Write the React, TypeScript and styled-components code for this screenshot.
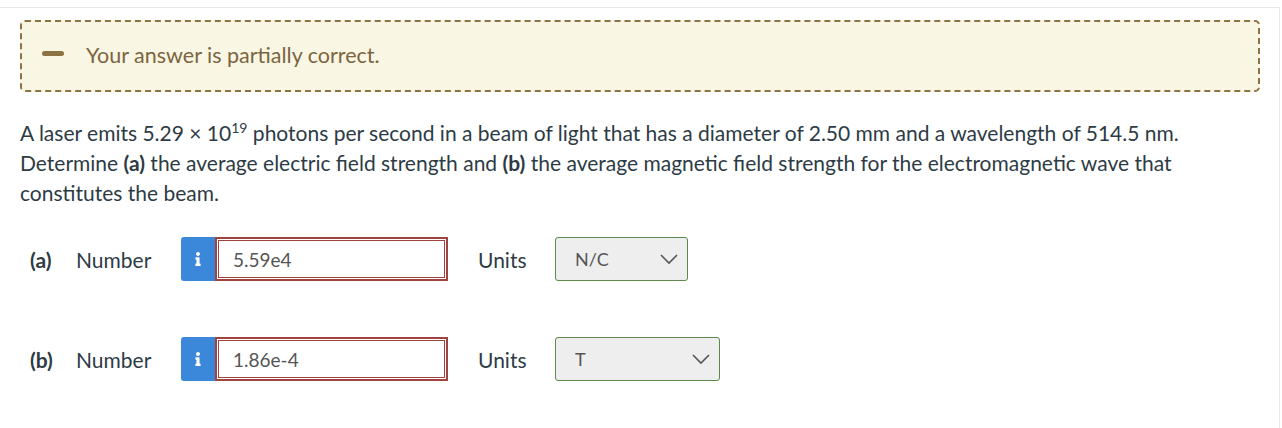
import React from "react";
import styled, { createGlobalStyle } from "styled-components";
import { FaInfo } from "react-icons/fa";

const GlobalStyle = createGlobalStyle`
  html, body {
    margin: 0;
    padding: 0;
    background: #ffffff;
  }
  body {
    font-family: Lato, "Noto Sans", sans-serif;
    color: #2d3b45;
  }
`;

const Frame = styled.div`
  width: 1280px;
  margin-top: 7px;
  border-top: 1px solid #e8e8e8;
  border-right: 1px solid #e8e8e8;
  padding: 12px 0 40px 20px;
  box-sizing: border-box;
  min-height: 421px;
`;

const Banner = styled.div`
  width: 1240px;
  height: 72px;
  box-sizing: border-box;
  display: flex;
  align-items: center;
  gap: 22px;
  padding: 0 0 0 20px;
  background: #faf6e4;
  border: 2px dashed #8c7343;
  border-radius: 5px;
`;

const MinusMark = styled.span`
  display: block;
  width: 22px;
  height: 5px;
  border-radius: 3px;
  background: #8c7343;
  margin-top: -6px;
`;

const BannerText = styled.span`
  font-size: 21.5px;
  color: #7a6540;
  margin-top: -2px;
`;

const Question = styled.p`
  width: 1240px;
  margin: 26px 0 0 0;
  font-size: 21px;
  line-height: 30px;
  color: #2d3b45;

  sup {
    font-size: 14px;
    line-height: 0;
    vertical-align: 8px;
  }
`;

const Row = styled.div<{ $top: number }>`
  display: flex;
  align-items: center;
  height: 44px;
  margin-top: ${(p) => p.$top}px;
  padding-left: 10px;
`;

const Part = styled.span`
  font-size: 21px;
  font-weight: 700;
  width: 46px;
`;

const Label = styled.span`
  font-size: 21px;
  width: 105px;
`;

const InfoButton = styled.button`
  width: 34px;
  height: 44px;
  border: none;
  padding: 0;
  border-radius: 3px 0 0 3px;
  background: #3b87d9;
  color: #ffffff;
  display: flex;
  align-items: center;
  justify-content: center;
`;

const AnswerInput = styled.div`
  width: 233px;
  height: 44px;
  box-sizing: border-box;
  border: 2px solid #a0433f;
  box-shadow: inset 0 0 0 1px #ffffff, inset 0 0 0 2px #a0433f;
  display: flex;
  align-items: center;
  padding-left: 16px;
  font-size: 19px;
  color: #555555;
  background: #ffffff;
`;

const UnitsLabel = styled.span`
  font-size: 21px;
  margin-left: 30px;
  width: 77px;
`;

const Select = styled.div<{ $w: number }>`
  width: ${(p) => p.$w}px;
  height: 44px;
  box-sizing: border-box;
  border: 1px solid #5b8a4c;
  border-radius: 3px;
  background: #eeeeee;
  display: flex;
  align-items: center;
  justify-content: space-between;
  padding: 0 8px 0 19px;
  font-size: 18px;
  color: #555555;
`;

const Chevron = () => (
  <svg width="20" height="12" viewBox="0 0 20 12">
    <polyline points="2,2 10,10 18,2" fill="none" stroke="#555" strokeWidth="1.6" />
  </svg>
);

const answers = [
  { part: "(a)", value: "5.59e4", unit: "N/C", selW: 133, top: 29 },
  { part: "(b)", value: "1.86e-4", unit: "T", selW: 165, top: 56 },
];

export default function App() {
  return (
    <>
      <GlobalStyle />
      <Frame>
        <Banner>
          <MinusMark />
          <BannerText>Your answer is partially correct.</BannerText>
        </Banner>
        <Question>
          A laser emits 5.29 × 10<sup>19</sup> photons per second in a beam of light that has a
          diameter of 2.50 mm and a wavelength of 514.5 nm. Determine <b>(a)</b> the average
          electric field strength and <b>(b)</b> the average magnetic field strength for the
          electromagnetic wave that constitutes the beam.
        </Question>
        {answers.map((a) => (
          <Row key={a.part} $top={a.top}>
            <Part>{a.part}</Part>
            <Label>Number</Label>
            <InfoButton>
              <FaInfo size={14} />
            </InfoButton>
            <AnswerInput>{a.value}</AnswerInput>
            <UnitsLabel>Units</UnitsLabel>
            <Select $w={a.selW}>
              <span>{a.unit}</span>
              <Chevron />
            </Select>
          </Row>
        ))}
      </Frame>
    </>
  );
}
